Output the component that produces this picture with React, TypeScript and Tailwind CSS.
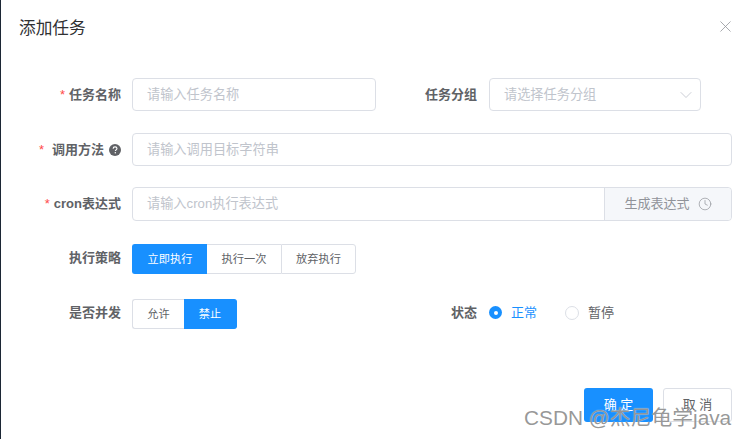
import type { ReactNode } from 'react';
import { ChevronDown, Clock, X } from 'lucide-react';

const FONT = 'font-["Liberation_Sans","Noto_Sans_CJK_SC",sans-serif]';

function Star() {
  return <span className="text-[#ff4949] font-normal">*</span>;
}

function FieldLabel({ children, width = 'w-[120px]', className = '' }: { children: ReactNode; width?: string; className?: string }) {
  return (
    <div className={`${width} ${className} shrink-0 flex items-center justify-end text-[13px] font-bold text-[#606266]`}>
      {children}
    </div>
  );
}

function TextInput({ placeholder, className }: { placeholder: string; className: string }) {
  return (
    <div className={`${className} flex items-center pl-[14px] border border-[#dcdfe6] rounded-[4px] text-[13.2px] text-[#c0c4cc]`}>
      {placeholder}
    </div>
  );
}

function Segmented({ items, active, widths }: { items: string[]; active: number; widths: string[] }) {
  return (
    <div className="flex h-[30px] text-[11.2px]">
      {items.map((item, i) => (
        <div
          key={item}
          className={`${widths[i]} flex items-center justify-center border-y ${
            i === active ? 'bg-[#1890ff] border-[#1890ff] text-white' : 'bg-white border-[#dcdfe6] text-[#606266]'
          } ${i === 0 ? 'rounded-l-[3px] border-l' : ''} ${i === items.length - 1 ? 'rounded-r-[3px] border-r' : ''} ${
            i > 0 && i !== active && i - 1 !== active ? 'border-l' : ''
          }`}
        >
          {item}
        </div>
      ))}
    </div>
  );
}

export default function App() {
  return (
    <div className={`${FONT} relative w-[748px] h-[439px] overflow-hidden bg-white border-l border-[#1c2735] flex flex-col`}>
      {/* Header */}
      <div className="h-[57px] pl-[18px] pr-[13px] flex items-center justify-between shrink-0">
        <span className="text-[16.7px] text-[#303133]">添加任务</span>
        <X className="w-[19px] h-[19px] text-[#909399] -mt-[4px]" strokeWidth={1} />
      </div>

      {/* Form */}
      <div className="flex flex-col pt-[21px]">
        <div className="flex h-[33px]">
          <FieldLabel>
            <Star />
            <span className="ml-[4px]">任务名称</span>
          </FieldLabel>
          <TextInput placeholder="请输入任务名称" className="ml-[11px] w-[244px]" />
          <FieldLabel width="w-[101px]">任务分组</FieldLabel>
          <div className="ml-[12px] w-[212px] flex items-center justify-between pl-[14px] pr-[4px] border border-[#dcdfe6] rounded-[4px] text-[13.2px] text-[#c0c4cc]">
            请选择任务分组
            <ChevronDown className="w-[20px] h-[20px] text-[#c0c4cc]" strokeWidth={1} />
          </div>
        </div>

        <div className="flex h-[33px] mt-[22px]">
          <FieldLabel>
            <Star />
            <span className="ml-[8px]">调用方法</span>
            <svg viewBox="0 0 16 16" className="ml-[5px] w-[12px] h-[12px] mr-[0px]">
              <circle cx="8" cy="8" r="8" fill="#606266" />
              <path d="M5.5 6.2c0-1.5 1.1-2.3 2.6-2.3s2.5.8 2.5 2.1c0 1-.6 1.5-1.3 2-.6.4-.8.7-.8 1.4" fill="none" stroke="#fff" strokeWidth="1.5" />
              <circle cx="8.4" cy="11.7" r="1" fill="#fff" />
            </svg>
          </FieldLabel>
          <TextInput placeholder="请输入调用目标字符串" className="ml-[11px] w-[600px]" />
        </div>

        <div className="flex h-[34px] mt-[21px]">
          <FieldLabel>
            <Star />
            <span className="ml-[4px]">cron表达式</span>
          </FieldLabel>
          <div className="ml-[11px] w-[600px] flex border border-[#dcdfe6] rounded-[4px]">
            <div className="flex-1 flex items-center pl-[14px] text-[13.2px] text-[#c0c4cc]">请输入cron执行表达式</div>
            <div className="w-[127px] flex items-center justify-center gap-[8px] bg-[#f5f7fa] border-l border-[#dcdfe6] rounded-r-[4px] text-[13px] text-[#909399]">
              生成表达式
              <Clock className="w-[14px] h-[14px]" strokeWidth={1.2} />
            </div>
          </div>
        </div>

        <div className="flex h-[30px] mt-[23px]">
          <FieldLabel className="pb-[2px]">执行策略</FieldLabel>
          <div className="ml-[11px]">
            <Segmented items={['立即执行', '执行一次', '放弃执行']} active={0} widths={['w-[75px]', 'w-[74px]', 'w-[75px]']} />
          </div>
        </div>

        <div className="flex h-[30px] mt-[25px]">
          <FieldLabel className="pb-[3px]">是否并发</FieldLabel>
          <div className="ml-[11px]">
            <Segmented items={['允许', '禁止']} active={1} widths={['w-[52px]', 'w-[53px]']} />
          </div>
          <FieldLabel width="w-[240px]" className="pb-[2px]">状态</FieldLabel>
          <div className="ml-[12px] pb-[3px] flex items-center text-[13px] text-[#606266]">
            <span className="w-[13px] h-[13px] rounded-full bg-[#1890ff] flex items-center justify-center">
              <span className="w-[4px] h-[4px] rounded-full bg-white" />
            </span>
            <span className="ml-[9px] text-[#1890ff]">正常</span>
            <span className="ml-[28px] w-[14px] h-[14px] rounded-full border border-[#dcdfe6]" />
            <span className="ml-[9px]">暂停</span>
          </div>
        </div>
      </div>

      {/* Footer */}
      <div className="flex justify-end gap-[10px] pr-[16px] mt-[59px]">
        <div className="w-[69px] h-[34px] flex items-center justify-center rounded-[3px] bg-[#1890ff] text-white text-[13px]">确 定</div>
        <div className="w-[69px] h-[34px] flex items-center justify-center rounded-[3px] border border-[#dcdfe6] text-[#606266] text-[13px]">取 消</div>
      </div>

      {/* CSDN watermark */}
      <div className="absolute left-[523px] top-[405px] text-[20.8px] leading-[26px] whitespace-nowrap text-[#858585]/85 [text-shadow:0_0_1px_rgba(255,255,255,0.9)]">
        CSDN @杰尼龟学java
      </div>
    </div>
  );
}
